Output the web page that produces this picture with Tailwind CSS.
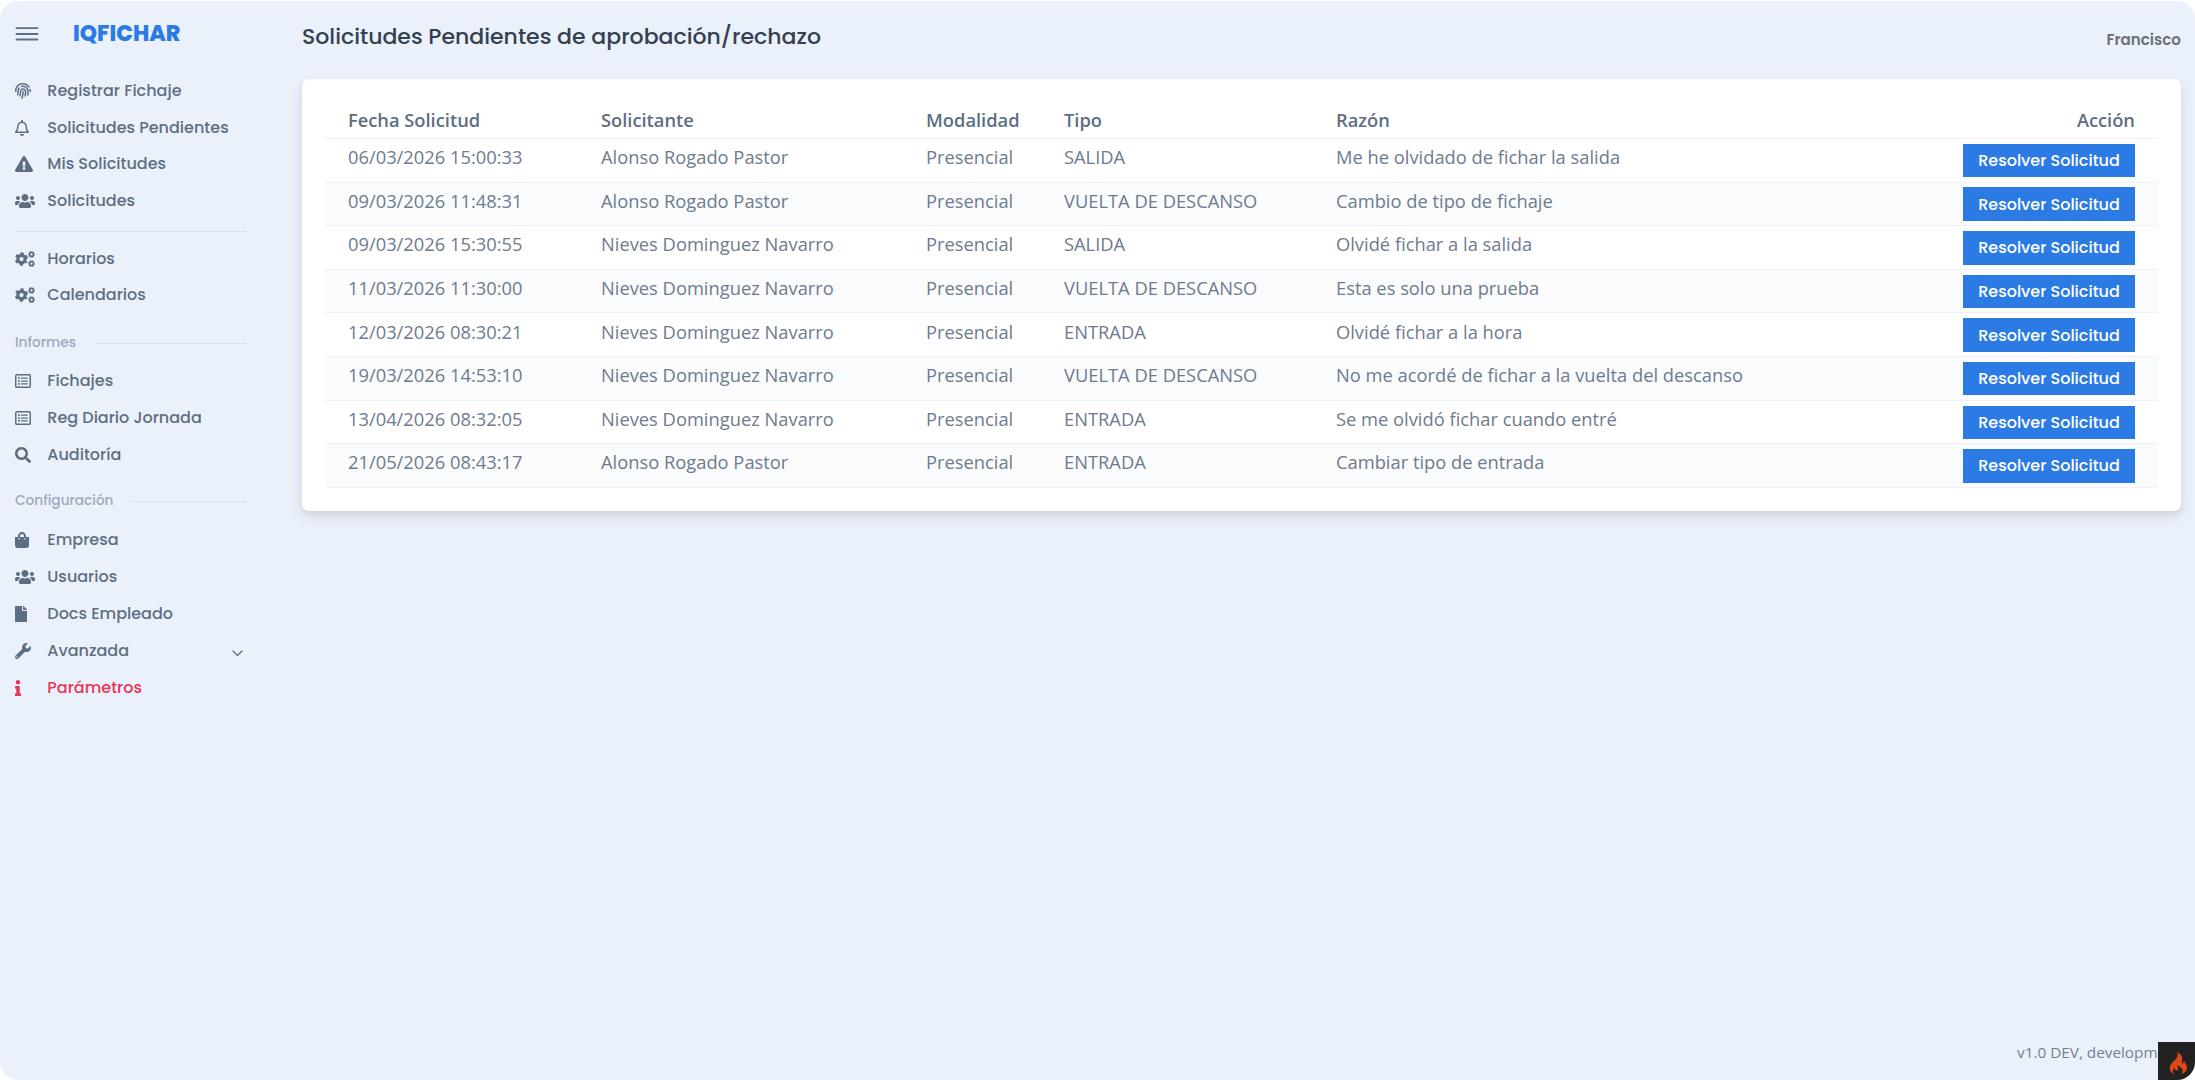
<!DOCTYPE html>
<html lang="es">
<head>
<meta charset="utf-8">
<title>IQFICHAR</title>
<script src="https://cdn.jsdelivr.net/npm/@tailwindcss/browser@4"></script>
</head>
<body class="bg-white">
<svg class="hidden" xmlns="http://www.w3.org/2000/svg">
<symbol id="finger" viewBox="0 0 512 512"><path d="M256.12 245.96c-13.25 0-24 10.74-24 24 1.14 72.25-8.14 141.9-27.7 211.55-2.73 9.72 2.15 30.49 23.12 30.49 10.48 0 20.11-6.92 23.09-17.52 13.53-47.91 31.04-125.41 29.48-224.52.01-13.25-10.73-24-23.99-24zm-.86-81.73C194 164.16 151.25 211.3 152.1 265.32c.75 47.94-3.75 95.91-13.37 142.55-2.69 12.98 5.67 25.69 18.64 28.36 13.05 2.67 25.67-5.66 28.36-18.64 10.34-50.09 15.17-101.58 14.37-153.02-.41-25.95 19.92-52.49 54.45-52.34 31.31.47 57.15 25.34 57.62 55.47.77 48.05-2.81 96.33-10.61 143.55-2.17 13.06 6.69 25.42 19.76 27.58 19.97 3.33 26.81-15.1 27.58-19.77 8.28-50.03 12.06-101.21 11.27-152.11-.88-55.8-47.94-101.88-104.91-102.72zm-110.69-19.78c-10.3-8.34-25.37-6.8-33.76 3.48-25.62 31.5-39.39 71.28-38.75 112 .59 37.58-2.47 75.27-9.11 112.05-2.34 13.05 6.31 25.53 19.36 27.89 20.11 3.5 27.07-14.81 27.89-19.36 7.19-39.84 10.5-80.66 9.86-121.33-.47-29.88 9.2-57.88 28-80.97 8.35-10.28 6.79-25.39-3.49-33.76zm109.47-62.33c-15.41-.41-30.87 1.44-45.78 4.97-12.89 3.06-20.87 15.98-17.83 28.89 3.06 12.89 16 20.83 28.89 17.83 11.05-2.61 22.47-3.77 34-3.69 75.43 1.13 137.73 61.5 138.88 134.58.59 37.88-1.28 76.11-5.58 113.63-1.5 13.17 7.95 25.08 21.11 26.58 16.72 1.95 25.51-11.88 26.58-21.11a929.06 929.06 0 0 0 5.89-119.85c-1.56-98.75-85.07-180.33-186.16-181.83zm252.07 121.45c-2.86-12.92-15.51-21.2-28.61-18.27-12.94 2.86-21.12 15.66-18.26 28.61 4.71 21.41 4.91 37.41 4.7 61.6-.11 13.27 10.55 24.09 23.8 24.2h.2c13.17 0 23.89-10.61 24-23.8.18-22.18.4-44.11-5.83-72.34zm-40.12-90.72C417.29 43.46 337.6 1.29 252.81.02 183.02-.82 118.47 24.91 70.46 72.94 24.09 119.37-.9 181.04.14 246.65l-.12 21.47c-.39 13.25 10.03 24.31 23.28 24.69.23.02.48.02.72.02 12.92 0 23.59-10.3 23.97-23.3l.16-23.64c-.83-52.5 19.16-101.86 56.28-139 38.76-38.8 91.34-59.67 147.68-58.86 69.45 1.03 134.73 35.56 174.62 92.39 7.61 10.86 22.56 13.45 33.42 5.86 10.84-7.62 13.46-22.59 5.84-33.43z"/></symbol>
<symbol id="bell" viewBox="0 0 448 512"><path d="M439.39 362.29c-19.32-20.76-55.47-51.99-55.47-154.29 0-77.7-54.48-139.9-127.94-155.16V32c0-17.67-14.32-32-31.98-32s-31.98 14.33-31.98 32v20.84C118.56 68.1 64.08 130.3 64.08 208c0 102.3-36.15 133.53-55.47 154.29-6 6.45-8.66 14.16-8.61 21.71.11 16.4 12.98 32 32.1 32h383.8c19.12 0 32-15.6 32.1-32 .05-7.55-2.61-15.27-8.61-21.71zM67.53 368c21.22-27.97 44.42-74.33 44.53-159.42 0-.2-.06-.38-.06-.58 0-61.86 50.14-112 112-112s112 50.14 112 112c0 .2-.06.38-.06.58.11 85.1 23.31 131.46 44.53 159.42H67.53zM224 512c35.32 0 63.97-28.65 63.97-64H160.03c0 35.35 28.65 64 63.97 64z"/></symbol>
<symbol id="warn" viewBox="0 0 576 512"><path d="M569.517 440.013C587.975 472.007 564.806 512 527.94 512H48.054c-36.937 0-59.999-40.055-41.577-71.987L246.423 23.985c18.467-32.009 64.72-31.951 83.154 0l239.94 416.028zM288 354c-25.405 0-46 20.595-46 46s20.595 46 46 46 46-20.595 46-46-20.595-46-46-46zm-43.673-165.346l7.418 136c.347 6.364 5.609 11.346 11.982 11.346h48.546c6.373 0 11.635-4.982 11.982-11.346l7.418-136c.375-6.874-5.098-12.654-11.982-12.654h-63.383c-6.884 0-12.356 5.78-11.981 12.654z"/></symbol>
<symbol id="users" viewBox="0 0 640 512"><path d="M96 224c35.3 0 64-28.7 64-64s-28.7-64-64-64-64 28.7-64 64 28.7 64 64 64zm448 0c35.3 0 64-28.7 64-64s-28.7-64-64-64-64 28.7-64 64 28.7 64 64 64zm32 32h-64c-17.6 0-33.5 7.1-45.1 18.6 40.3 22.1 68.9 62 75.1 109.4h66c17.7 0 32-14.3 32-32v-32c0-35.3-28.7-64-64-64zm-256 0c61.9 0 112-50.1 112-112S381.9 32 320 32 208 82.1 208 144s50.1 112 112 112zm76.8 32h-8.3c-20.8 10-43.9 16-68.5 16s-47.6-6-68.5-16h-8.3C179.6 288 128 339.6 128 403.2V432c0 26.5 21.5 48 48 48h288c26.5 0 48-21.5 48-48v-28.8c0-63.6-51.6-115.2-115.2-115.2zm-223.7-13.4C161.5 263.1 145.6 256 128 256H64c-35.3 0-64 28.7-64 64v32c0 17.7 14.3 32 32 32h65.9c6.3-47.4 34.9-87.3 75.2-109.4z"/></symbol>
<symbol id="cogs" viewBox="0 0 640 512"><g fill="none" stroke="currentColor"><circle cx="208" cy="256" r="118" stroke-width="100"/><circle cx="208" cy="256" r="180" stroke-width="64" stroke-dasharray="100 88.500" stroke-dashoffset="50" transform="rotate(30 208 256)"/><circle cx="530" cy="108" r="64" stroke-width="54"/><circle cx="530" cy="108" r="94" stroke-width="24" stroke-dasharray="56 42.430" stroke-dashoffset="28"/><circle cx="530" cy="404" r="64" stroke-width="54"/><circle cx="530" cy="404" r="94" stroke-width="24" stroke-dasharray="56 42.430" stroke-dashoffset="28"/></g></symbol>
<symbol id="list" viewBox="0 0 512 512"><g fill="none" stroke="currentColor" stroke-width="48"><rect x="24" y="56" width="464" height="400" rx="36"/><path d="M192 166h216M192 256h216M192 346h216" stroke-width="40"/><path d="M100 166h56M100 256h56M100 346h56" stroke-width="56"/></g></symbol>
<symbol id="search" viewBox="0 0 512 512"><path d="M505 442.7L405.3 343c-4.5-4.5-10.6-7-17-7H372c27.6-35.3 44-79.7 44-128C416 93.1 322.9 0 208 0S0 93.1 0 208s93.1 208 208 208c48.3 0 92.7-16.4 128-44v16.3c0 6.4 2.5 12.5 7 17l99.7 99.7c9.4 9.4 24.6 9.4 33.9 0l28.3-28.3c9.4-9.4 9.4-24.6.1-34zM208 336c-70.7 0-128-57.2-128-128 0-70.7 57.2-128 128-128 70.7 0 128 57.2 128 128 0 70.7-57.2 128-128 128z"/></symbol>
<symbol id="bag" viewBox="0 0 448 512"><path fill-rule="evenodd" d="M352 160v-32C352 57.400 294.600 0 224 0S96 57.400 96 128v32H0v272c0 44.200 35.800 80 80 80h288c44.200 0 80-35.800 80-80V160zM160 128c0-35.300 28.700-64 64-64s64 28.700 64 64v32H160zM128 192a24 24 0 1 1 0 48 24 24 0 0 1 0-48zM320 192a24 24 0 1 1 0 48 24 24 0 0 1 0-48z"/></symbol>
<symbol id="file" viewBox="0 0 384 512"><path d="M224 136V0H24C10.700 0 0 10.700 0 24v464c0 13.300 10.700 24 24 24h336c13.300 0 24-10.700 24-24V160H248c-13.200 0-24-10.800-24-24zm160-14.100v6.100H256V0h6.100c6.400 0 12.500 2.500 17 7l97.900 98c4.500 4.500 7 10.600 7 16.900z"/></symbol>
<symbol id="wrench" viewBox="0 0 512 512"><path d="M507.730 109.100c-2.240-9.030-13.540-12.090-20.120-5.510l-74.360 74.360-67.880-11.310-11.310-67.880 74.360-74.360c6.620-6.620 3.430-17.900-5.660-20.160-47.380-11.740-99.550.910-136.580 37.930-39.640 39.640-50.550 97.100-34.050 147.200L18.740 402.760c-24.990 24.990-24.990 65.510 0 90.500 24.990 24.990 65.510 24.990 90.500 0l213.210-213.210c50.120 16.710 107.470 5.680 147.370-34.220 37.070-37.070 49.700-89.320 37.910-136.730zM64 472c-13.250 0-24-10.750-24-24 0-13.260 10.750-24 24-24s24 10.740 24 24c0 13.250-10.750 24-24 24z"/></symbol>
<symbol id="info" viewBox="0 0 192 512"><path d="M20 424.229h20V279.771H20c-11.046 0-20-8.954-20-20V212c0-11.046 8.954-20 20-20h112c11.046 0 20 8.954 20 20v212.229h20c11.046 0 20 8.954 20 20V492c0 11.046-8.954 20-20 20H20c-11.046 0-20-8.954-20-20v-47.771c0-11.046 8.954-20 20-20zM96 0C56.235 0 24 32.235 24 72s32.235 72 72 72 72-32.235 72-72S135.764 0 96 0z"/></symbol>
</svg>

<div class="pt-px">
<div class="relative flex h-[1079px] w-full overflow-hidden rounded-[18px] bg-[#ebf1fa] font-[Poppins,Inter,sans-serif]">

<!-- Sidebar -->
<aside class="w-[302px] shrink-0 pl-[15px] text-base font-medium text-[#5e6e82]">
  <div class="flex h-[71.200px] items-start">
    <svg class="mt-[26px] h-[14px] w-[24px]" viewBox="0 0 24 14" fill="none" stroke="currentColor" stroke-width="1.800" stroke-linecap="round"><path d="M1.500 1.200h21M1.500 7h21M1.500 12.500h21"/></svg>
    <span class="ml-[34px] mt-[17px] text-[22px] leading-8 font-extrabold text-[#2c7be5]">IQFICHAR</span>
  </div>
  <nav class="w-[232px]">
    <a class="flex h-[36.900px] items-center"><span class="w-[32.300px]"><svg class="h-4 w-4 fill-current"><use href="#finger"/></svg></span>Registrar Fichaje</a>
    <a class="flex h-[36.900px] items-center"><span class="w-[32.300px]"><svg class="h-4 w-3.5 fill-current"><use href="#bell"/></svg></span>Solicitudes Pendientes</a>
    <a class="flex h-[36.900px] items-center"><span class="w-[32.300px]"><svg class="h-4 w-[18px] fill-current"><use href="#warn"/></svg></span>Mis Solicitudes</a>
    <a class="flex h-[36.900px] items-center"><span class="w-[32.300px]"><svg class="h-4 w-5 fill-current"><use href="#users"/></svg></span>Solicitudes</a>
    <div class="h-[20.400px] pt-[11px]"><div class="h-px bg-[#d8e2ef]"></div></div>
    <a class="flex h-[36.900px] items-center"><span class="w-[32.300px]"><svg class="h-4 w-5"><use href="#cogs"/></svg></span>Horarios</a>
    <a class="flex h-[36.900px] items-center"><span class="w-[32.300px]"><svg class="h-4 w-5"><use href="#cogs"/></svg></span>Calendarios</a>
    <div class="flex h-[48.900px] items-center gap-[18px] pt-[10px] text-[13.700px] text-[#9da9bb]">Informes<div class="h-px flex-1 bg-[#d8e2ef]"></div></div>
    <a class="flex h-[36.900px] items-center"><span class="w-[32.300px]"><svg class="h-4 w-4"><use href="#list"/></svg></span>Fichajes</a>
    <a class="flex h-[36.900px] items-center"><span class="w-[32.300px]"><svg class="h-4 w-4"><use href="#list"/></svg></span>Reg Diario Jornada</a>
    <a class="flex h-[36.900px] items-center"><span class="w-[32.300px]"><svg class="h-4 w-4 fill-current"><use href="#search"/></svg></span>Auditoría</a>
    <div class="flex h-[48.500px] items-center gap-[18px] pt-[8px] text-[13.700px] text-[#9da9bb]">Configuración<div class="h-px flex-1 bg-[#d8e2ef]"></div></div>
    <a class="flex h-[36.900px] items-center"><span class="w-[32.300px]"><svg class="h-4 w-3.5 fill-current"><use href="#bag"/></svg></span>Empresa</a>
    <a class="flex h-[36.900px] items-center"><span class="w-[32.300px]"><svg class="h-4 w-5 fill-current"><use href="#users"/></svg></span>Usuarios</a>
    <a class="flex h-[36.900px] items-center"><span class="w-[32.300px]"><svg class="h-4 w-3 fill-current"><use href="#file"/></svg></span>Docs Empleado</a>
    <a class="flex h-[36.900px] items-center"><span class="w-[32.300px]"><svg class="h-4 w-4 fill-current"><use href="#wrench"/></svg></span>Avanzada
      <svg class="mt-1 mr-[4px] ml-auto h-[7px] w-[11px]" viewBox="0 0 11 7" fill="none" stroke="currentColor" stroke-width="1.300" stroke-linecap="round" stroke-linejoin="round"><path d="M1 1l4.500 4.500L10 1"/></svg></a>
    <a class="flex h-[36.900px] items-center text-[#e63757]"><span class="w-[32.300px]"><svg class="h-4 w-1.5 fill-current"><use href="#info"/></svg></span>Parámetros</a>
  </nav>
</aside>

<!-- Content -->
<main class="flex min-w-0 flex-1 flex-col pr-[14px]">
  <header class="flex h-[78px] items-start justify-between">
    <h1 class="mt-[20px] text-[22px] leading-8 font-medium text-[#344050]">Solicitudes Pendientes de aprobación/rechazo</h1>
    <span class="mt-[23px] text-[15.100px] leading-8 font-semibold text-[#6b7078]">Francisco</span>
  </header>
  <section class="h-[432px] rounded-[7px] bg-white px-[23px] pt-[22.500px] font-['Open_Sans',sans-serif] shadow-[0_7px_14px_0_rgba(65,69,88,0.1),0_3px_6px_0_rgba(0,0,0,0.07)]">
    <div class="grid h-[37.400px] grid-cols-[253px_325px_138px_272px_1fr_195px] items-start border-b border-[#edf2f9] pt-[4px] text-[18.300px] leading-[27.400px] font-semibold text-[#5e6e82] *:px-[23px]">
      <div>Fecha Solicitud</div><div>Solicitante</div><div>Modalidad</div><div>Tipo</div><div>Razón</div><div class="text-right">Acción</div>
    </div>
    <div id="rows"></div>
  </section>
  <footer class="mt-auto pb-[12px] text-right font-['Open_Sans',sans-serif] text-[15.300px] leading-8 text-[#748194]">v1.0 DEV, development</footer>
</main>

<!-- Debug toolbar toggle -->
<div class="absolute right-0 bottom-0 flex h-[38px] w-[37px] items-center justify-center bg-[#222]">
  <svg class="mt-1 ml-1 h-[23px] w-[19px]" viewBox="0 0 19 23"><path fill="#dd4814" d="M8.200.5c1 2.700.3 4.600-1.500 6.700C4.500 9.700.8 12 .8 16.200c0 3 1.900 5.200 4.900 6.300-1.600-1.300-2.200-2.800-1.700-4.400.3-1 1-1.700 1.600-2.400-.1 1.400.4 2.400 1.500 2.800 1.500.4 2.600-.9 2-2.400-.4-1.100-1.100-1.900-.4-3.400.5 1.300 1.600 1.900 2.800 2.700 2.700 1.900 3.100 5-.2 7.200 4-1 6.700-3.400 6.700-7 0-3.300-2.300-4.700-3.200-7.300-.6 1-.3 2 .2 3-1.200.3-2.300-.5-2.200-1.900.1-1.200.6-2.400.2-4.200C12.500 3.100 10.700 1.300 8.200.5z"/></svg>
</div>
</div>
</div>

<script>
const data = [
  ["06/03/2026 15:00:33","Alonso Rogado Pastor","Presencial","SALIDA","Me he olvidado de fichar la salida"],
  ["09/03/2026 11:48:31","Alonso Rogado Pastor","Presencial","VUELTA DE DESCANSO","Cambio de tipo de fichaje"],
  ["09/03/2026 15:30:55","Nieves Dominguez Navarro","Presencial","SALIDA","Olvidé fichar a la salida"],
  ["11/03/2026 11:30:00","Nieves Dominguez Navarro","Presencial","VUELTA DE DESCANSO","Esta es solo una prueba"],
  ["12/03/2026 08:30:21","Nieves Dominguez Navarro","Presencial","ENTRADA","Olvidé fichar a la hora"],
  ["19/03/2026 14:53:10","Nieves Dominguez Navarro","Presencial","VUELTA DE DESCANSO","No me acordé de fichar a la vuelta del descanso"],
  ["13/04/2026 08:32:05","Nieves Dominguez Navarro","Presencial","ENTRADA","Se me olvidó fichar cuando entré"],
  ["21/05/2026 08:43:17","Alonso Rogado Pastor","Presencial","ENTRADA","Cambiar tipo de entrada"]
];
document.getElementById("rows").innerHTML = data.map(r =>
  `<div class="grid h-[43.620px] grid-cols-[253px_325px_138px_272px_1fr_195px] items-start border-b border-[#edf2f9] pt-[4.200px] text-[18.320px] leading-[27.400px] text-[#6e7b8e] even:bg-[#f9fbfd]">
    ${r.map(c => `<div class="pl-[23px] whitespace-nowrap">${c}</div>`).join("")}
    <div class="pr-[23px]"><button class="mt-[0.800px] block h-[33.500px] w-[172px] bg-[#2c7be5] font-[Poppins,Inter,sans-serif] text-[16px] leading-[33px] font-medium text-white">Resolver Solicitud</button></div>
  </div>`).join("");
</script>
</body>
</html>
